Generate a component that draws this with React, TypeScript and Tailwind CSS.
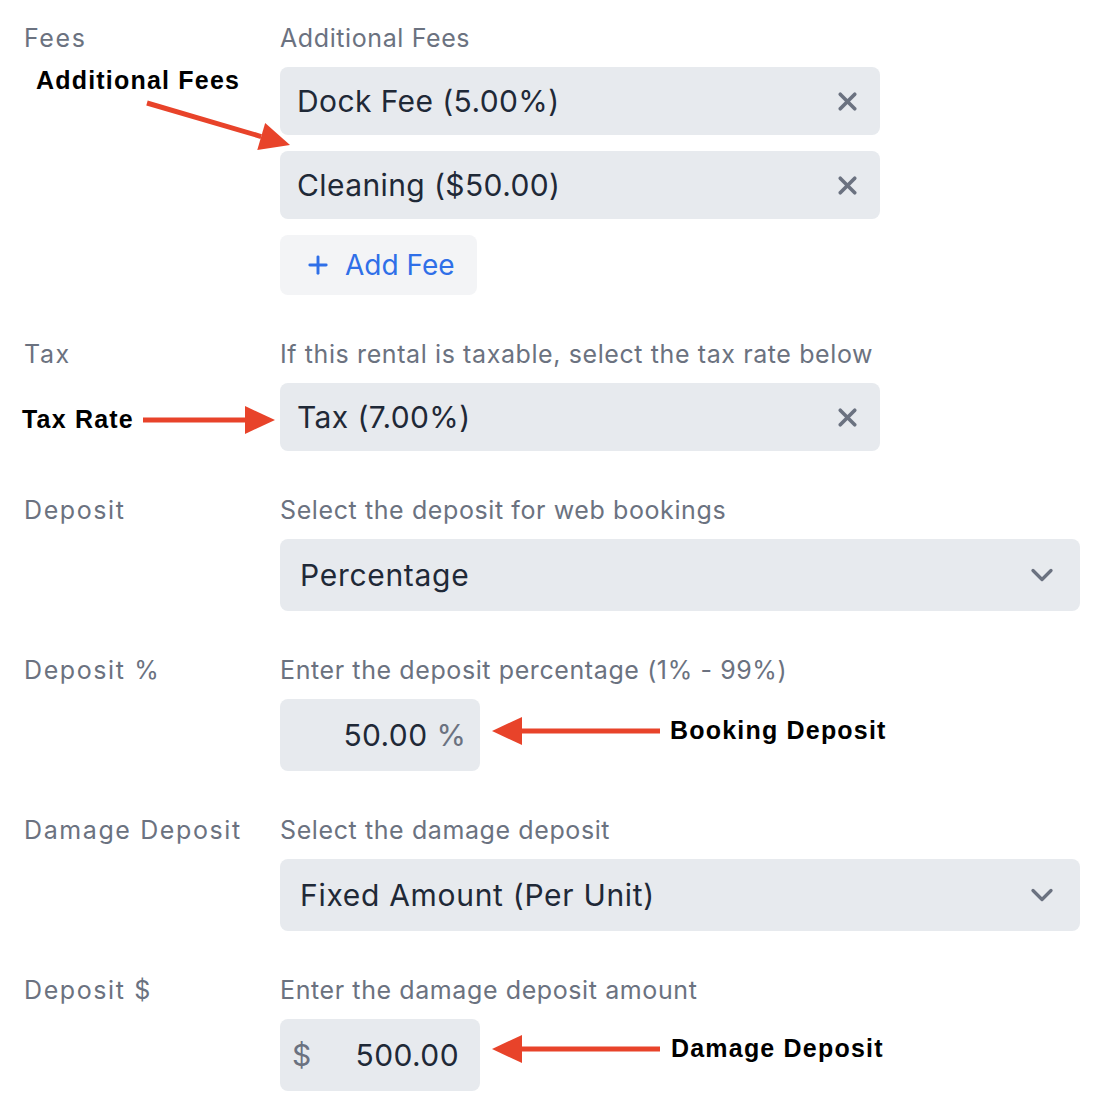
import { ChevronDown, Plus, X } from 'lucide-react'

const font = { fontFamily: 'Inter, "Noto Sans", sans-serif' }

function Row({ label, help, children }: { label: string; help: string; children: React.ReactNode }) {
  return (
    <div className="flex">
      <div className="w-[256px] shrink-0 text-[25px] leading-[30px] text-[#6b7280] tracking-[1.6px]">{label}</div>
      <div className="flex flex-col">
        <div className="text-[25px] leading-[30px] text-[#6b7280] tracking-[0.6px]">{help}</div>
        <div className="mt-[14px] flex flex-col gap-4">{children}</div>
      </div>
    </div>
  )
}

function Chip({ text }: { text: string }) {
  return (
    <div className="w-[600px] h-[68px] rounded-lg bg-[#e7eaee] flex items-center justify-between pl-[17px] pr-[18px]">
      <span className="text-[30px] text-[#1f2937] tracking-[0.4px]">{text}</span>
      <X size={29} strokeWidth={3} className="text-[#6b7280]" />
    </div>
  )
}

function Select({ text }: { text: string }) {
  return (
    <div className="w-[800px] h-[72px] rounded-lg bg-[#e7eaee] flex items-center justify-between pl-[20px] pr-[20px]">
      <span className="text-[30px] text-[#1f2937] tracking-[0.7px]">{text}</span>
      <ChevronDown size={36} strokeWidth={2.2} className="text-[#6b7280]" />
    </div>
  )
}

function Arrow({ x1, y1, x2, y2 }: { x1: number; y1: number; x2: number; y2: number }) {
  const ang = Math.atan2(y2 - y1, x2 - x1)
  const len = 30
  const w = 14
  const bx = x2 - len * Math.cos(ang)
  const by = y2 - len * Math.sin(ang)
  const px = -Math.sin(ang) * w
  const py = Math.cos(ang) * w
  return (
    <g>
      <line x1={x1} y1={y1} x2={bx} y2={by} stroke="#e8432a" strokeWidth={5} />
      <polygon points={`${x2},${y2} ${bx + px},${by + py} ${bx - px},${by - py}`} fill="#e8432a" />
    </g>
  )
}

export default function App() {
  return (
    <div className="relative w-[1118px] h-[1114px] bg-white overflow-hidden" style={font}>
      <div className="flex flex-col gap-[44px] pt-[23px] pl-[24px]">
        <Row label="Fees" help="Additional Fees">
          <Chip text="Dock Fee (5.00%)" />
          <Chip text="Cleaning ($50.00)" />
          <div className="w-[197px] h-[60px] rounded-lg bg-[#f3f4f6] flex items-center gap-[13px] pl-[24px]">
            <Plus size={28} strokeWidth={2.5} className="text-[#2f6fe8]" />
            <span className="text-[28px] text-[#2f6fe8]">Add Fee</span>
          </div>
        </Row>
        <Row label="Tax" help="If this rental is taxable, select the tax rate below">
          <Chip text="Tax (7.00%)" />
        </Row>
        <Row label="Deposit" help="Select the deposit for web bookings">
          <Select text="Percentage" />
        </Row>
        <Row label="Deposit %" help="Enter the deposit percentage (1% - 99%)">
          <div className="w-[200px] h-[72px] rounded-lg bg-[#e7eaee] flex items-center justify-end pr-[14px] gap-[9px]">
            <span className="text-[30px] text-[#1f2937] tracking-[0.4px]">50.00</span>
            <span className="text-[30px] text-[#6b7280]">%</span>
          </div>
        </Row>
        <Row label="Damage Deposit" help="Select the damage deposit">
          <Select text="Fixed Amount (Per Unit)" />
        </Row>
        <Row label="Deposit $" help="Enter the damage deposit amount">
          <div className="w-[200px] h-[72px] rounded-lg bg-[#e7eaee] flex items-center justify-between pl-[12px] pr-[21px]">
            <span className="text-[30px] text-[#6b7280]">$</span>
            <span className="text-[30px] text-[#1f2937] tracking-[0.4px]">500.00</span>
          </div>
        </Row>
      </div>

      <svg className="absolute inset-0 pointer-events-none" width={1118} height={1114}>
        <Arrow x1={147} y1={103} x2={290} y2={145} />
        <Arrow x1={143} y1={420} x2={275} y2={420} />
        <Arrow x1={660} y1={731} x2={492} y2={731} />
        <Arrow x1={660} y1={1049} x2={492} y2={1049} />
      </svg>

      <div className="absolute inset-0 pointer-events-none font-bold text-black text-[25px] tracking-[1.2px]" style={{ fontFamily: '"Liberation Sans", Arial, sans-serif' }}>
        <div className="absolute left-[36px] top-[62px]">Additional Fees</div>
        <div className="absolute left-[22px] top-[401px]">Tax Rate</div>
        <div className="absolute left-[670px] top-[712px]">Booking Deposit</div>
        <div className="absolute left-[671px] top-[1030px]">Damage Deposit</div>
      </div>
    </div>
  )
}
